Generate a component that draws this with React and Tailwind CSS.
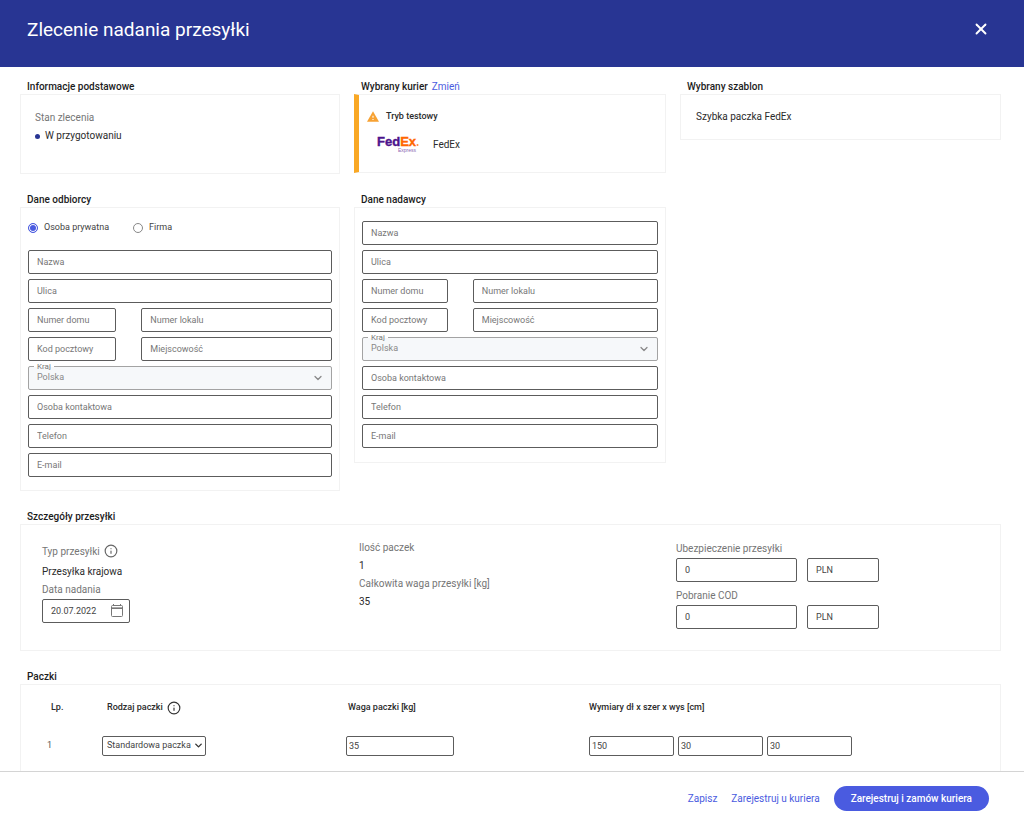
import React from "react";
import { X, ChevronDown, Info } from "lucide-react";

const FIELD =
  "block h-6 w-full min-w-0 rounded-xs border border-[#5c5c5c] bg-white px-2 text-[9px] text-[#444] placeholder:text-[#777] placeholder:opacity-100 outline-none focus:border-[#4a5be0]";
const CELL =
  "block h-5 min-w-0 rounded-xs border border-[#5c5c5c] bg-white px-0.5 text-[9px] text-[#444] outline-none focus:border-[#4a5be0]";

function Section({ title, action, className = "", children }) {
  return (
    <section>
      <h2 className="pt-0.5 pl-[7px] text-[10px] leading-3.5 font-medium text-[#1c1c1c]">
        {title}
        {action}
      </h2>
      <div className={`border border-[#f2f2f2] bg-white ${className}`}>{children}</div>
    </section>
  );
}

function Country({ id }) {
  return (
    <div className="relative">
      <label
        htmlFor={id}
        className="absolute -top-1 left-[6px] bg-linear-to-b from-white from-50% to-[#f6f8fa] to-50% px-[3px] text-[8px] leading-2.5 text-[#777]"
      >
        Kraj
      </label>
      <select
        id={id}
        disabled
        defaultValue="Polska"
        className="block h-6 w-full appearance-none rounded-xs border border-[#a3a3a3] bg-[#f6f8fa] px-2 text-[9px] text-[#888] opacity-100"
      >
        <option>Polska</option>
      </select>
      <ChevronDown
        className="pointer-events-none absolute top-1.5 right-2 text-[#888]"
        size={12}
        strokeWidth={2.5}
      />
    </div>
  );
}

function Address({ prefix }) {
  const field = (name) => (
    <input className={FIELD} placeholder={name} aria-label={`${prefix}: ${name}`} autoComplete="off" />
  );
  return (
    <div className="flex flex-col gap-[5px]">
      {field("Nazwa")}
      {field("Ulica")}
      <div className="grid grid-cols-[88fr_190fr] gap-[25px]">
        {field("Numer domu")}
        {field("Numer lokalu")}
      </div>
      <div className="grid grid-cols-[88fr_190fr] gap-[25px]">
        {field("Kod pocztowy")}
        {field("Miejscowość")}
      </div>
      <Country id={`${prefix}-kraj`} />
      {field("Osoba kontaktowa")}
      {field("Telefon")}
      {field("E-mail")}
    </div>
  );
}

function RadioOption({ label, checked }) {
  return (
    <label className="flex items-center gap-1.5 text-[9px] text-[#444]">
      <input
        type="radio"
        name="odbiorca"
        defaultChecked={checked}
        className="size-2.5 appearance-none rounded-full border border-[#888] bg-white checked:border-[#4a5be0] checked:bg-[#4a5be0] checked:shadow-[inset_0_0_0_1px_white]"
      />
      {label}
    </label>
  );
}

function InfoButton({ label, className }) {
  return (
    <button type="button" aria-label={label} className={className}>
      <Info size={14} strokeWidth={2} />
    </button>
  );
}

function Amount({ id, label }) {
  return (
    <div>
      <label htmlFor={id} className="block leading-[19px] text-[#757575]">
        {label}
      </label>
      <div className="flex gap-2.5">
        <div className="w-[121px]">
          <input id={id} className={FIELD} defaultValue="0" />
        </div>
        <div className="w-[72px]">
          <input className={FIELD} defaultValue="PLN" aria-label={`${label} – waluta`} />
        </div>
      </div>
    </div>
  );
}

function FedExLogo() {
  return (
    <svg width="42" height="22" viewBox="0 0 42 22" role="img" aria-label="FedEx Express">
      <text x="0" y="13" fontFamily="'Liberation Sans', sans-serif" fontWeight="700" fontSize="13" strokeWidth="0.4">
        <tspan fill="#4d148c" stroke="#4d148c">Fed</tspan>
        <tspan fill="#ff6600" stroke="#ff6600">Ex</tspan>
      </text>
      <circle cx="40.5" cy="12" r="1" fill="#ff8a3c" />
      <text x="21" y="19" fontFamily="'Liberation Sans', sans-serif" fontSize="5" fill="#8a68b4">
        Express
      </text>
    </svg>
  );
}

export default function App() {
  return (
    <div className="flex h-screen flex-col bg-white font-['Roboto',sans-serif] text-[10px] text-[#2b2b2b]">
      <header className="flex h-[67px] shrink-0 items-start justify-between bg-[#283593] pt-4 pr-[34px] pl-[27px] text-white">
        <h1 className="text-[19px] leading-7">Zlecenie nadania przesyłki</h1>
        <button type="button" aria-label="Zamknij" className="flex h-[26px] items-center">
          <X size={18} strokeWidth={2.5} />
        </button>
      </header>

      <main className="flex min-h-0 flex-1 flex-col gap-[17px] overflow-y-auto pt-[11px] pr-[23px] pb-5 pl-5 [scrollbar-width:none]">
        <div className="grid grid-cols-[320fr_312fr_321fr] items-start gap-x-3.5 gap-y-[17px]">
          <Section title="Informacje podstawowe" className="h-20 px-3.5 py-3.5">
            <p className="leading-[18px] text-[#757575]">Stan zlecenia</p>
            <p className="flex items-center gap-[5px] leading-[18px]">
              <span className="size-[5px] rounded-full bg-[#283593]" />W przygotowaniu
            </p>
          </Section>

          <Section
            title="Wybrany kurier"
            action={
              <a href="#kurier" className="ml-1 font-normal text-[#4a5be0]">
                Zmień
              </a>
            }
            className="h-[79px] border-l-5 border-l-[#f9a825] py-3 pl-2"
          >
            <p className="flex items-center gap-[7px] text-[9px] leading-[18px] font-medium">
              <svg width="12" height="11" viewBox="0 0 22 19" aria-hidden="true">
                <path d="M0 19h22L11 0 0 19z" fill="#f7a233" />
                <path d="M12 16h-2v-2h2v2zm0-4h-2V8h2v4z" fill="#fff" />
              </svg>
              Tryb testowy
            </p>
            <div className="mt-2 flex items-center gap-3.5 pl-2.5">
              <FedExLogo />
              <span>FedEx</span>
            </div>
          </Section>

          <Section title="Wybrany szablon" className="px-[15px] py-[13px]">
            <p className="leading-[18px]">Szybka paczka FedEx</p>
          </Section>

          <Section title="Dane odbiorcy" className="px-[7px] pt-[11px] pb-[13px]">
            <div className="mb-[13px] flex h-[18px] items-center gap-6">
              <RadioOption label="Osoba prywatna" checked />
              <RadioOption label="Firma" />
            </div>
            <Address prefix="odbiorca" />
          </Section>

          <Section title="Dane nadawcy" className="px-[7px] pt-[13px] pb-3.5">
            <Address prefix="nadawca" />
          </Section>
        </div>

        <Section
          title="Szczegóły przesyłki"
          className="grid grid-cols-3 pt-3.5 pr-[7px] pb-[21px] pl-[21px]"
        >
          <div>
            <div className="flex h-6 items-center gap-1 text-[#757575]">
              Typ przesyłki
              <InfoButton label="Informacje o typie przesyłki" className="text-[#666]" />
            </div>
            <p className="leading-[18px]">Przesyłka krajowa</p>
            <label htmlFor="data-nadania" className="block leading-[18px] text-[#757575]">
              Data nadania
            </label>
            <div className="relative w-[88px]">
              <input id="data-nadania" className={FIELD} defaultValue="20.07.2022" />
              <svg
                className="pointer-events-none absolute top-[5px] right-[7px]"
                width="12"
                height="13"
                viewBox="0 0 12 13"
                fill="none"
                stroke="#777"
                aria-hidden="true"
              >
                <rect x="0.5" y="1.5" width="11" height="11" rx="1" />
                <path d="M1 3h10v1.5H1z" fill="#aaa" stroke="none" />
                <path d="M0.5 4.5h11M2.5 0v2M9.5 0v2" />
              </svg>
            </div>
          </div>
          <dl className="leading-[18px]">
            <dt className="text-[#757575]">Ilość paczek</dt>
            <dd>1</dd>
            <dt className="text-[#757575]">Całkowita waga przesyłki [kg]</dt>
            <dd>35</dd>
          </dl>
          <div className="flex flex-col gap-1">
            <Amount id="ubezpieczenie" label="Ubezpieczenie przesyłki" />
            <Amount id="pobranie" label="Pobranie COD" />
          </div>
        </Section>

        <Section title="Paczki" className="pb-5">
          <table className="w-full table-fixed text-left text-[9px]">
            <colgroup>
              <col className="w-[81px]" />
              <col className="w-[244px]" />
              <col className="w-[243px]" />
              <col />
            </colgroup>
            <thead>
              <tr className="h-[46px]">
                <th className="pl-[30px] font-medium">Lp.</th>
                <th className="pl-[5px] font-medium">
                  <span className="flex items-center gap-1">
                    Rodzaj paczki
                    <InfoButton label="Informacje o rodzaju paczki" className="text-[#333]" />
                  </span>
                </th>
                <th className="pl-0.5 font-medium">Waga paczki [kg]</th>
                <th className="font-medium">Wymiary dł x szer x wys [cm]</th>
              </tr>
            </thead>
            <tbody>
              <tr className="h-[30px]">
                <td className="pl-[26px] text-[#555]">1</td>
                <td>
                  <div className="relative w-[104px]">
                    <select
                      aria-label="Rodzaj paczki"
                      className="block h-5 w-full appearance-none rounded-xs border border-[#5c5c5c] bg-white pl-1 text-[9px] text-[#444]"
                    >
                      <option>Standardowa paczka</option>
                    </select>
                    <ChevronDown
                      className="pointer-events-none absolute top-1 right-0.5 text-[#333]"
                      size={11}
                      strokeWidth={3}
                    />
                  </div>
                </td>
                <td>
                  <input aria-label="Waga paczki [kg]" defaultValue="35" className={`${CELL} w-[108px]`} />
                </td>
                <td>
                  <div className="flex gap-1">
                    <input aria-label="Długość [cm]" defaultValue="150" className={`${CELL} w-[85px]`} />
                    <input aria-label="Szerokość [cm]" defaultValue="30" className={`${CELL} w-[85px]`} />
                    <input aria-label="Wysokość [cm]" defaultValue="30" className={`${CELL} w-[85px]`} />
                  </div>
                </td>
              </tr>
            </tbody>
          </table>
        </Section>
      </main>

      <footer className="flex shrink-0 items-center justify-end gap-3.5 border-t border-[#d4d4d4] bg-white pt-3.5 pr-[35px] pb-[9px] text-[#4a5be0]">
        <button type="button">Zapisz</button>
        <button type="button">Zarejestruj u kuriera</button>
        <button type="button" className="h-[25px] rounded-full bg-[#4a5be0] px-[17px] font-medium text-white">
          Zarejestruj i zamów kuriera
        </button>
      </footer>
    </div>
  );
}
